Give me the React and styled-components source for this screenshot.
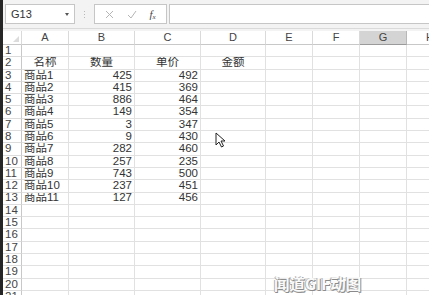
import React from "react";
import styled, { createGlobalStyle } from "styled-components";

const Global = createGlobalStyle`
  html, body { margin: 0; padding: 0; background: #fff; overflow: hidden; }
  body { font-family: "Liberation Sans", "Noto Sans CJK SC", sans-serif; }
`;

const COLS = [19, 47, 66, 66, 65, 47, 47, 47, 47];
const ROW_H = 12.3;

const data = [
  ["商品1", 425, 492],
  ["商品2", 415, 369],
  ["商品3", 886, 464],
  ["商品4", 149, 354],
  ["商品5", 3, 347],
  ["商品6", 9, 430],
  ["商品7", 282, 460],
  ["商品8", 257, 235],
  ["商品9", 743, 500],
  ["商品10", 237, 451],
  ["商品11", 127, 456],
];

const Page = styled.div`
  width: 429px;
  height: 295px;
  display: flex;
  overflow: hidden;
  position: relative;
`;

const LeftStrip = styled.div`
  width: 3px;
  flex: none;
  background: #262626;
`;

const Main = styled.div`
  flex: 1;
  display: flex;
  flex-direction: column;
  min-width: 0;
  overflow: hidden;
`;

const Toolbar = styled.div`
  height: 29px;
  flex: none;
  background: #f3f3f3;
  border-bottom: 1px solid #dadada;
  display: flex;
  align-items: center;
  padding: 0 0 0 2px;
  box-sizing: border-box;
`;

const NameBox = styled.div`
  width: 70px;
  height: 20px;
  box-sizing: border-box;
  background: #fff;
  border: 1px solid #c6c6c6;
  display: flex;
  align-items: center;
  justify-content: space-between;
  padding: 0 5px 0 5px;
  font-size: 11px;
  color: #333;
`;

const Caret = styled.span`
  width: 0;
  height: 0;
  border-left: 2.5px solid transparent;
  border-right: 2.5px solid transparent;
  border-top: 3px solid #555;
`;

const Dots = styled.div`
  width: 19px;
  display: flex;
  flex-direction: column;
  align-items: center;
  gap: 2px;
  span { width: 1px; height: 1px; background: #b8b8b8; }
`;

const FxBox = styled.div`
  width: 73px;
  height: 20px;
  box-sizing: border-box;
  background: #fff;
  border: 1px solid #c6c6c6;
  display: flex;
  align-items: center;
  justify-content: space-around;
  padding: 0 4px;
`;

const Fx = styled.span`
  font-family: "Liberation Serif", serif;
  font-style: italic;
  font-size: 11px;
  color: #444;
  sub { font-size: 7px; vertical-align: -1px; }
`;

const Formula = styled.div`
  flex: 1;
  height: 20px;
  margin-left: 2px;
  box-sizing: border-box;
  background: #fff;
  border: 1px solid #c6c6c6;
  border-right: none;
`;

const Gap = styled.div`
  height: 2px;
  flex: none;
  background: #f3f3f3;
`;

const Grid = styled.div`
  display: grid;
  grid-template-columns: ${COLS.map((c) => c + "px").join(" ")};
  grid-auto-rows: ${ROW_H}px;
  grid-template-rows: 14px;
  font-size: 11.5px;
  color: #333;
`;

const HeadCell = styled.div`
  background: ${(p) => (p.$sel ? "#d4d4d4" : "#fff")};
  border-right: 1px solid ${(p) => (p.$sel ? "#b8b8b8" : "#dadada")};
  border-bottom: 1px solid ${(p) => (p.$sel ? "#9a9a9a" : "#c8c8c8")};
  box-sizing: border-box;
  display: flex;
  align-items: center;
  justify-content: center;
  color: #444;
  font-size: 11px;
  line-height: 1;
  position: relative;
`;

const Corner = styled(HeadCell)`
  &::after {
    content: "";
    position: absolute;
    right: 2px;
    bottom: 2px;
    width: 0;
    height: 0;
    border-left: 6px solid transparent;
    border-bottom: 6px solid #dcdcdc;
  }
`;

const RowHead = styled.div`
  background: #fff;
  border-right: 1px solid #c8c8c8;
  border-bottom: 1px solid #dcdcdc;
  box-sizing: border-box;
  display: flex;
  align-items: center;
  justify-content: flex-start;
  padding-left: 2px;
  color: #444;
  font-size: 11.5px;
  line-height: 1;
`;

const Cell = styled.div`
  border-right: 1px solid #e1e1e1;
  border-bottom: 1px solid #e1e1e1;
  box-sizing: border-box;
  display: flex;
  align-items: center;
  justify-content: ${(p) =>
    p.$align === "right" ? "flex-end" : p.$align === "center" ? "center" : "flex-start"};
  padding: 0 2px;
  white-space: nowrap;
  overflow: hidden;
  line-height: 1;
  color: #333;
`;

const Cursor = styled.svg`
  position: absolute;
  left: 215px;
  top: 132px;
`;

const Watermark = styled.div`
  position: absolute;
  left: 274px;
  top: 275px;
  font-family: "Noto Sans CJK SC", sans-serif;
  font-weight: 700;
  font-size: 15.5px;
  line-height: 17px;
  color: #fafafa;
  text-shadow: 1px 1px 0 #8a8a8a, -1px 0 0 #b0b0b0, 0 1px 0 #9a9a9a;
`;

const letters = ["A", "B", "C", "D", "E", "F", "G", "H"];

export default function App() {
  const rows = [];
  for (let r = 1; r <= 21; r++) {
    let cells = Array(8).fill({ v: "", a: "left" });
    if (r === 2) {
      cells = [
        { v: "名称", a: "center" },
        { v: "数量", a: "center" },
        { v: "单价", a: "center" },
        { v: "金额", a: "center" },
        ...Array(4).fill({ v: "", a: "left" }),
      ];
    } else if (r >= 3 && r <= 13) {
      const d = data[r - 3];
      cells = [
        { v: d[0], a: "left" },
        { v: d[1], a: "right" },
        { v: d[2], a: "right" },
        ...Array(5).fill({ v: "", a: "left" }),
      ];
    }
    rows.push(
      <React.Fragment key={r}>
        <RowHead>{r}</RowHead>
        {cells.map((c, i) => (
          <Cell key={i} $align={c.a}>
            {c.v}
          </Cell>
        ))}
      </React.Fragment>
    );
  }
  return (
    <>
      <Global />
      <Page>
        <LeftStrip />
        <Main>
          <Toolbar>
            <NameBox>
              <span>G13</span>
              <Caret />
            </NameBox>
            <Dots>
              <span />
              <span />
              <span />
            </Dots>
            <FxBox>
              <svg width="9" height="9" viewBox="0 0 9 9">
                <path d="M1 1 L8 8 M8 1 L1 8" stroke="#b5b5b5" strokeWidth="1" fill="none" />
              </svg>
              <svg width="10" height="9" viewBox="0 0 10 9">
                <path d="M1 5 L4 8 L9 1" stroke="#b5b5b5" strokeWidth="1" fill="none" />
              </svg>
              <Fx>
                f<sub>x</sub>
              </Fx>
            </FxBox>
            <Formula />
          </Toolbar>
          <Gap />
          <Grid>
            <Corner />
            {letters.map((l) => (
              <HeadCell key={l} $sel={l === "G"}>
                {l}
              </HeadCell>
            ))}
            {rows}
          </Grid>
        </Main>
        <Cursor width="12" height="18" viewBox="0 0 12 18">
          <path
            d="M1 1 L1 13 L4 10 L6.5 15 L8.5 14 L6 9 L10 9 Z"
            fill="#fff"
            stroke="#222"
            strokeWidth="1"
            strokeLinejoin="round"
          />
        </Cursor>
        <Watermark>闻道GIF动图</Watermark>
      </Page>
    </>
  );
}
